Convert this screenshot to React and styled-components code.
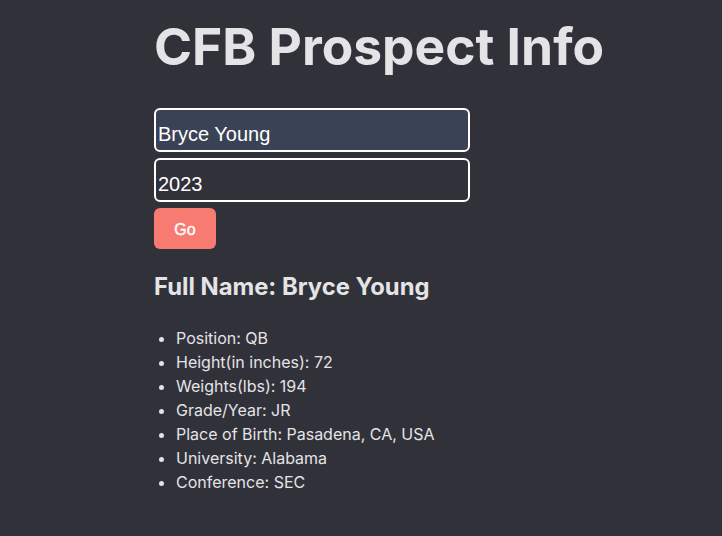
import React from "react";
import styled, { createGlobalStyle } from "styled-components";

const Global = createGlobalStyle`
  html, body { margin: 0; padding: 0; background: #31313a; }
  body { font-family: Inter, "Noto Sans", sans-serif; color: #e4e4e7; min-height: 536px; }
`;

const Page = styled.main`
  padding: 15px 0 0 154px;
`;

const Title = styled.h1`
  margin: 0 0 31px;
  font-size: 51.5px;
  font-weight: 700;
  line-height: 62px;
  color: #e4e4e7;
  white-space: nowrap;
`;

const Form = styled.form`
  display: flex;
  flex-direction: column;
  align-items: flex-start;
  gap: 6px;
`;

const Field = styled.input`
  box-sizing: border-box;
  width: 316px;
  height: 44px;
  border: 2px solid #ffffff;
  border-radius: 6px;
  background: ${(p) => (p.$active ? "#3a4356" : "transparent")};
  color: #ffffff;
  font-family: "Liberation Sans", Arial, sans-serif;
  font-size: 20px;
  padding: 8px 2px 0;
  outline: none;
`;

const Button = styled.button`
  width: 62px;
  height: 41px;
  border: none;
  border-radius: 6px;
  background: #f87b72;
  color: #ffffff;
  font-family: "Liberation Sans", Arial, sans-serif;
  font-size: 16px;
  font-weight: 400;
  -webkit-text-stroke: 0.4px #ffffff;
  padding: 2px 0 0;
  cursor: pointer;
`;

const Name = styled.h2`
  margin: 23px 0 24px;
  font-size: 23.8px;
  font-weight: 700;
  line-height: 30px;
  color: #e4e4e7;
`;

const List = styled.ul`
  margin: 0;
  padding-left: 22px;
  font-size: 16px;
  line-height: 24px;
  color: #e4e4e7;
`;

const data = [
  "Position: QB",
  "Height(in inches): 72",
  "Weights(lbs): 194",
  "Grade/Year: JR",
  "Place of Birth: Pasadena, CA, USA",
  "University: Alabama",
  "Conference: SEC",
];

export default function App() {
  return (
    <>
      <Global />
      <Page>
        <Title>CFB Prospect Info</Title>
        <Form onSubmit={(e) => e.preventDefault()}>
          <Field $active defaultValue="Bryce Young" />
          <Field defaultValue="2023" />
          <Button type="submit">Go</Button>
        </Form>
        <Name>Full Name: Bryce Young</Name>
        <List>
          {data.map((d) => (
            <li key={d}>{d}</li>
          ))}
        </List>
      </Page>
    </>
  );
}
